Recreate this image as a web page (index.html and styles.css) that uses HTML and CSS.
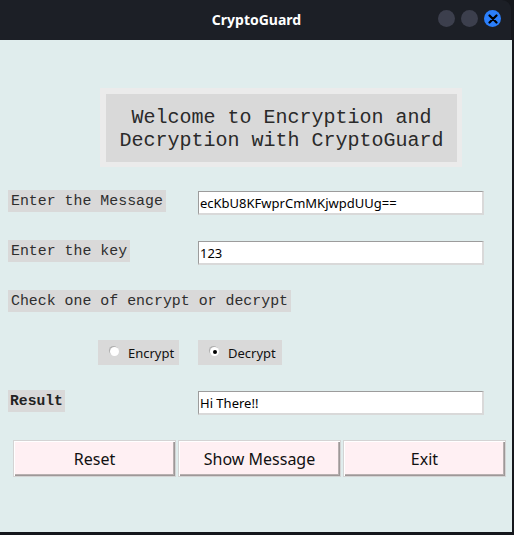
FILE: index.html
```html
<!DOCTYPE html>
<html>
<head>
<meta charset="utf-8">
<title>CryptoGuard</title>
<link rel="stylesheet" href="styles.css">
</head>
<body>
<div class="window">
  <div class="titlebar">
    <div class="title">CryptoGuard</div>
    <div class="controls">
      <span class="dot"></span>
      <span class="dot"></span>
      <span class="dot close">
        <svg width="10" height="10" viewBox="0 0 10 10"><path d="M1.5 1.5 L8.5 8.5 M8.5 1.5 L1.5 8.5" stroke="#000" stroke-width="2.2" stroke-linecap="round"/></svg>
      </span>
    </div>
  </div>
  <div class="content">
    <div class="welcome">
      <div class="welcome-inner">Welcome to Encryption and<br>Decryption with CryptoGuard</div>
    </div>
    <div class="row">
      <div class="label">Enter the Message</div>
      <div class="entry">ecKbU8KFwprCmMKjwpdUUg==</div>
    </div>
    <div class="row">
      <div class="label">Enter the key</div>
      <div class="entry">123</div>
    </div>
    <div class="row">
      <div class="label">Check one of encrypt or decrypt</div>
    </div>
    <div class="row radios">
      <div class="radio r-enc"><span class="circle"></span>Encrypt</div>
      <div class="radio r-dec"><span class="circle checked"></span>Decrypt</div>
    </div>
    <div class="row">
      <div class="label bold">Result</div>
      <div class="entry">Hi There!!</div>
    </div>
    <div class="buttons">
      <div class="btn">Reset</div>
      <div class="btn">Show Message</div>
      <div class="btn">Exit</div>
    </div>
  </div>
</div>
</body>
</html>
```

FILE: styles.css
```css
html, body {
  margin: 0;
  padding: 0;
  background: #15171c;
  width: 514px;
  height: 535px;
  overflow: hidden;
}
.window {
  width: 512px;
  height: 532px;
  display: flex;
  flex-direction: column;
}
.titlebar {
  height: 40px;
  background: #1c1f26;
  border-top-right-radius: 9px;
  display: flex;
  align-items: center;
  justify-content: center;
  position: relative;
  width: 511px;
}
.title {
  font-family: "Noto Sans", sans-serif;
  font-weight: bold;
  font-size: 14px;
  color: #ffffff;
  margin-left: 2px;
  margin-top: -2px;
}
.controls {
  position: absolute;
  right: 10px;
  top: 10px;
  display: flex;
  gap: 6px;
}
.dot {
  width: 17px;
  height: 17px;
  border-radius: 50%;
  background: #3c3f4d;
  display: flex;
  align-items: center;
  justify-content: center;
}
.dot.close {
  background: #2b7ffb;
}
.content {
  flex: 1;
  background: #e0eded;
  display: flex;
  flex-direction: column;
}
.welcome {
  margin: 48px 0 0 100px;
  width: 351px;
  height: 68px;
  border: 6px solid #ebebeb;
  border-right-width: 5px;
  border-bottom-width: 5px;
  background: #d9d9d9;
  display: flex;
  align-items: center;
  justify-content: center;
}
.welcome-inner {
  font-family: "Liberation Mono", monospace;
  font-size: 20px;
  line-height: 23px;
  color: #2a2a2a;
  text-align: center;
  margin-top: 1px;
}
.row {
  height: 50px;
  display: flex;
  align-items: flex-start;
  padding-left: 8px;
  position: relative;
}
.welcome + .row {
  margin-top: 23px;
}
.label {
  font-family: "Liberation Mono", monospace;
  font-size: 14.9px;
  height: 22px;
  line-height: 22px;
  padding: 0 3px;
  background: #d9d9d9;
  color: #2e2e2e;
  white-space: pre;
}
.label.bold {
  font-weight: bold;
  font-size: 14.7px;
  padding: 0 2px;
  color: #222;
}
.entry {
  position: absolute;
  left: 198px;
  width: 282px;
  height: 21px;
  margin-top: 1px;
  background: #ffffff;
  border-top: 1px solid #9c9c9c;
  border-left: 1px solid #9c9c9c;
  border-bottom: 2px solid #d9d9d9;
  border-right: 2px solid #d9d9d9;
  font-family: "Noto Sans", sans-serif;
  font-size: 13px;
  line-height: 22px;
  padding-left: 1px;
  color: #000;
}
.radios {
  padding-left: 98px;
  gap: 19px;
}
.radio {
  height: 25px;
  background: #d9d9d9;
  display: flex;
  align-items: center;
  font-family: "Noto Sans", sans-serif;
  font-size: 13px;
  color: #111;
  box-sizing: border-box;
}
.r-enc { width: 81px; padding-left: 12px; }
.r-dec { width: 84px; padding-left: 12px; }
.circle {
  width: 9px;
  height: 9px;
  border-radius: 50%;
  background: #ffffff;
  box-shadow: -1px -1px 0 #b0b0b0;
  margin-right: 9px;
  margin-top: -2px;
  display: flex;
  align-items: center;
  justify-content: center;
}
.circle.checked::after {
  content: "";
  width: 4px;
  height: 4px;
  border-radius: 50%;
  background: #000;
}
.buttons {
  display: flex;
  gap: 2px;
  padding-left: 13px;
}
.btn {
  width: 161px;
  height: 35px;
  border: 1px solid #d4d4d4;
  background: #fff0f3;
  box-shadow: inset 1px 1px 0 #ffffff, inset -1px -1px 0 #9e9898, inset -2px -2px 0 #b8b0b0;
  font-family: "Noto Sans", sans-serif;
  font-size: 16px;
  color: #111;
  display: flex;
  align-items: center;
  justify-content: center;
}
```
